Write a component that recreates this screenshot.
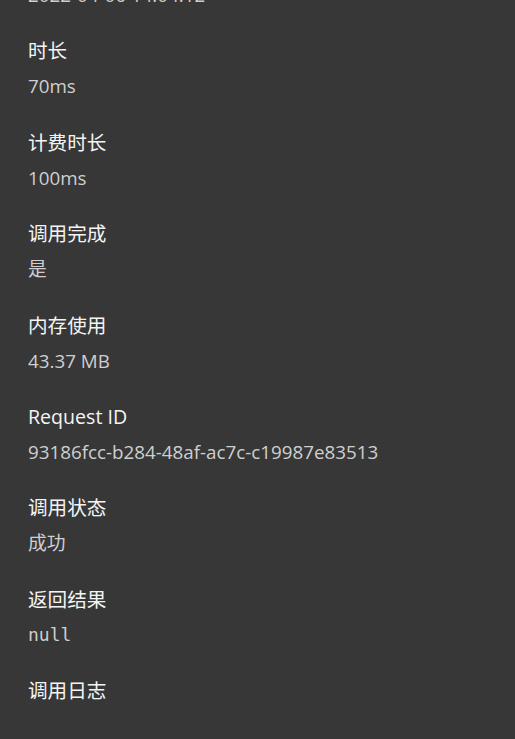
import React from 'react';

interface Item {
  label: string;
  value: string;
  mono?: boolean;
}

const items: Item[] = [
  { label: '调用时间', value: '2022-04-06 14:04:12' },
  { label: '时长', value: '70ms' },
  { label: '计费时长', value: '100ms' },
  { label: '调用完成', value: '是' },
  { label: '内存使用', value: '43.37 MB' },
  { label: 'Request ID', value: '93186fcc-b284-48af-ac7c-c19987e83513' },
  { label: '调用状态', value: '成功' },
  { label: '返回结果', value: 'null', mono: true },
  { label: '调用日志', value: '' },
];

const sans = "font-['Open_Sans','Noto_Sans_CJK_SC',sans-serif]";

export default function App() {
  return (
    <div className="h-[739px] overflow-hidden bg-[#373737]">
      <div className="pl-[28px] mt-[-52px]">
        {items.map((it) => (
          <div key={it.label} className="mb-[32.4px]">
            <div className={`${sans} text-[19.6px] leading-[24px] text-[#f4f4f4]`}>{it.label}</div>
            <div
              className={`mt-[11px] h-[24px] leading-[24px] text-[#cfcfcf] ${
                it.mono ? "font-['DejaVu_Sans_Mono',monospace] text-[18px]" : `${sans} text-[18.8px]`
              }`}
            >
              {it.value}
            </div>
          </div>
        ))}
      </div>
    </div>
  );
}
